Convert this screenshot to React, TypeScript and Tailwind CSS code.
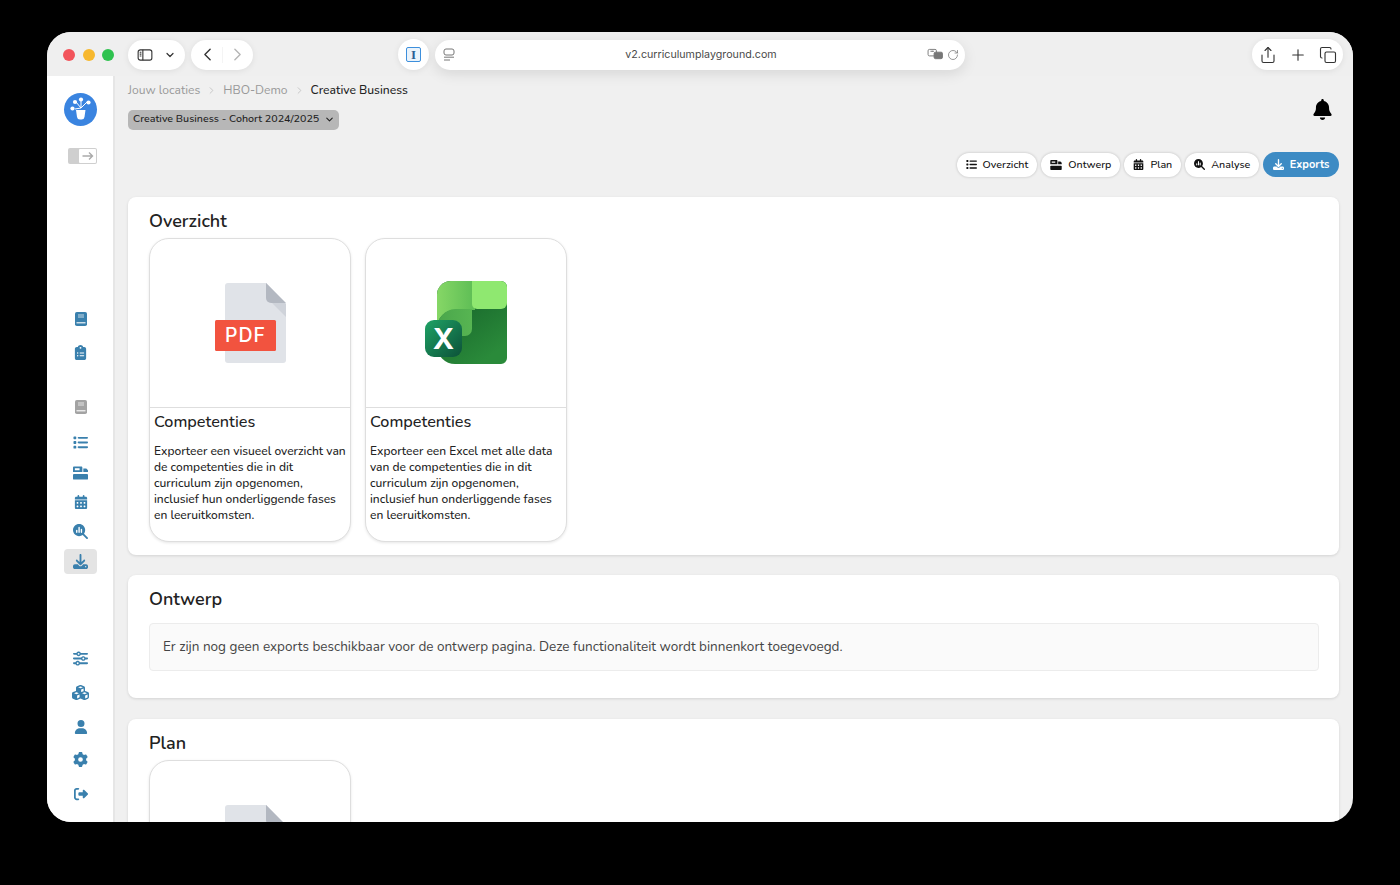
import React from "react";
import {
  FaClipboardList, FaList, FaCalendarDays, FaMagnifyingGlassChart, FaDownload,
  FaSliders, FaCubes, FaUser, FaGear, FaRightFromBracket, FaBell,
} from "react-icons/fa6";
import { ChevronLeft, ChevronRight, ChevronDown, Plus, RotateCw, Share, Copy } from "lucide-react";

const DesignIcon = ({ className }: { className?: string }) => (
  <svg viewBox="0 0 16 14" className={className} fill="currentColor">
    <path d="M1.2 0h7.6c.7 0 1.2.5 1.2 1.2V6H0V1.2C0 .5.5 0 1.2 0zM2 2v2h5V2H2zM11 2.2h3.2L16 4v2h-5V2.2z" />
    <path d="M1 8h14c.6 0 1 .4 1 1v4c0 .6-.4 1-1 1H1c-.6 0-1-.4-1-1V9c0-.6.4-1 1-1z" />
  </svg>
);

const BookIcon = ({ className }: { className?: string }) => (
  <svg viewBox="0 0 12 14" className={className}>
    <rect width="12" height="14" rx="1.8" fill="currentColor" />
    <path d="M3 3h6M3 5h6" stroke="#fff" strokeWidth="0.9" opacity="0.8" />
    <path d="M1.5 10.8h9" stroke="#fff" strokeWidth="1.1" />
  </svg>
);

const PdfIcon = ({ label = true }: { label?: boolean }) => (
  <svg viewBox="0 0 72 82" className="ml-[2px] h-[82px] w-[72px]">
    <path d="M13 1h38l20 21v56a3 3 0 0 1-3 3H13a3 3 0 0 1-3-3V4a3 3 0 0 1 3-3z" fill="#e0e3e8" />
    <path d="M51 1l20 21v13L51 15z" fill="#cfd3da" />
    <path d="M51 1l20 20H56a5 5 0 0 1-5-5z" fill="#b3b8c1" />
    <rect x="0" y="38" width="61" height="31" rx="1.5" fill="#f2533f" />
    {label && (
      <text x="30.5" y="60" textAnchor="middle" fill="#fff" fontSize="19.5" fontWeight="500" fontFamily="Inter, sans-serif" letterSpacing="0.9">PDF</text>
    )}
  </svg>
);

const ExcelIcon = () => (
  <svg viewBox="0 0 82 84" className="-mt-[2px] h-[84px] w-[82px]">
    <defs>
      <linearGradient id="xa" x1="0" y1="0" x2="1" y2="0"><stop offset="0" stopColor="#86d766" /><stop offset="1" stopColor="#5dbd55" /></linearGradient>
      <linearGradient id="xb" x1="0" y1="0" x2="0.6" y2="1"><stop offset="0" stopColor="#115a26" /><stop offset="1" stopColor="#2a8a3a" /></linearGradient>
      <linearGradient id="xc" x1="0" y1="0" x2="1" y2="1"><stop offset="0" stopColor="#1fa366" /><stop offset="1" stopColor="#0c5138" /></linearGradient>
      <linearGradient id="xd" x1="0" y1="0" x2="1" y2="0"><stop offset="0" stopColor="#4aa64b" /><stop offset="1" stopColor="#57b552" /></linearGradient>
    </defs>
    <path d="M26 1h50a6 6 0 0 1 6 6v71a6 6 0 0 1-6 6H30a18 18 0 0 1-18-18V15A14 14 0 0 1 26 1z" fill="url(#xb)" />
    <path d="M26 1h24v29H30a18 18 0 0 0-18 18V15A14 14 0 0 1 26 1z" fill="url(#xa)" />
    <path d="M30 29h17v20a7 7 0 0 1-7 7H12v-8a19 19 0 0 1 18-19z" fill="url(#xd)" />
    <path d="M47 1h29a6 6 0 0 1 6 6v16a6 6 0 0 1-6 6H52a5 5 0 0 1-5-5V1z" fill="#8fe870" />
    <rect x="0" y="40" width="37" height="37" rx="9" fill="url(#xc)" />
    <text x="18.5" y="69" textAnchor="middle" fill="#fff" fontSize="29" fontWeight="700" fontFamily="Inter, sans-serif">X</text>
  </svg>
);

const Tab = ({ icon, label, active }: { icon: React.ReactNode; label: string; active?: boolean }) => (
  <div className={`flex items-center gap-[6px] rounded-full ${active ? "h-[25px] bg-[#3d8bc4] px-[9.5px] text-[11px] font-bold text-white" : "h-[24px] bg-white px-[9px] text-[10.7px] font-medium text-[#111] shadow-[0_0_3px_rgba(0,0,0,0.22)]"}`}>
    {icon}
    <span className="pt-[1px]">{label}</span>
  </div>
);

const SideIcon = ({ children, active, cls }: { children: React.ReactNode; active?: boolean; cls?: string }) => (
  <div className={`flex h-[25px] w-[33px] items-center justify-center rounded-[4px] pl-px text-[#3a80ad] ${active ? "bg-[#e4e4e4]" : ""} ${cls ?? ""}`}>
    {children}
  </div>
);

const ExportCard = ({ icon, text }: { icon: React.ReactNode; text?: string }) => (
  <div className="flex h-[304px] w-[202px] flex-col overflow-hidden rounded-[20px] border border-[#dedede] bg-white shadow-[0_1px_3px_rgba(0,0,0,0.1)]">
    <div className="flex h-[169px] shrink-0 items-center justify-center border-b border-[#dedede]">{icon}</div>
    {text && (
      <div className="pl-[4px] pr-[1px] pt-[1.5px]">
        <div className="text-[16.2px] font-medium leading-[24px] text-[#222]">Competenties</div>
        <p className="mt-[9.5px] text-[12px] font-medium leading-[16px] text-[#222]">{text}</p>
      </div>
    )}
  </div>
);

export default function App() {
  return (
    <div className="h-[885px] w-[1400px] overflow-hidden bg-black px-[47px] pt-[32px] font-['Nunito','Noto_Sans',sans-serif]">
      <div className="flex h-[790px] w-[1306px] flex-col overflow-hidden rounded-[24px] bg-[#f0f0f0]">
        {/* Browser toolbar */}
        <div className="relative flex h-[44px] shrink-0 items-center bg-[#efefef] pt-[1px]">
          <div className="ml-[16px] flex gap-[7.5px]">
            <span className="h-[12px] w-[12px] rounded-full bg-[#f2545b]" />
            <span className="h-[12px] w-[12px] rounded-full bg-[#f7b82e]" />
            <span className="h-[12px] w-[12px] rounded-full bg-[#2fc24f]" />
          </div>
          <div className="ml-[14px] flex h-[30px] w-[57px] items-center justify-center gap-[11px] rounded-full bg-white shadow-[0_1px_6px_rgba(0,0,0,0.08)]">
            <svg viewBox="0 0 18 14" className="h-[12px] w-[16px]" fill="none" stroke="#333" strokeWidth="1.3">
              <rect x="1" y="1" width="16" height="12" rx="2.5" />
              <path d="M6.5 1v12M2.8 3.8h2M2.8 6h2M2.8 8.2h2" />
            </svg>
            <ChevronDown size={12} strokeWidth={2.4} color="#333" />
          </div>
          <div className="ml-[6px] flex h-[30px] w-[62px] items-center justify-center gap-[4px] rounded-full bg-white shadow-[0_1px_6px_rgba(0,0,0,0.08)]">
            <ChevronLeft size={21} strokeWidth={1.6} color="#333" />
            <span className="h-[16px] w-px bg-[#f4f4f4]" />
            <ChevronRight size={21} strokeWidth={1.6} color="#b5b5b5" />
          </div>
          <div className="ml-[145px] flex h-[31px] w-[31px] items-center justify-center rounded-full bg-white shadow-[0_1px_6px_rgba(0,0,0,0.08)]">
            <div className="flex h-[15px] w-[15px] items-center justify-center rounded-[2px] border border-[#3d8fdc] bg-[#eaf3fb] font-['Liberation_Serif',serif] text-[13px] font-bold leading-none text-[#2a5f95]">I</div>
          </div>
          <div className="ml-[6px] flex h-[30px] w-[530px] items-center rounded-full bg-white pl-[7px] pr-[6px] shadow-[0_4px_14px_rgba(0,0,0,0.1)]">
            <svg viewBox="0 0 14 14" className="mr-[19px] h-[14px] w-[14px]" fill="none" stroke="#777" strokeWidth="1">
              <rect x="2" y="1" width="10" height="6" rx="2" />
              <path d="M2 9.2h10M2 12h6" />
            </svg>
            <div className="flex-1 pt-[1px] text-center font-['Inter',sans-serif] text-[10.7px] text-[#4a4a4a]">v2.curriculumplayground.com</div>
            <svg viewBox="0 0 18 14" className="mr-[3px] h-[13px] w-[17px]" fill="none" stroke="#777" strokeWidth="1">
              <rect x="1" y="1.5" width="9" height="7" rx="1.5" />
              <path d="M3.5 3.5h4M5.5 3v1" />
              <rect x="7.5" y="4.5" width="9" height="7" rx="1.5" fill="#777" />
            </svg>
            <RotateCw size={12} strokeWidth={1.5} color="#777" />
          </div>
          <div className="ml-[287px] flex h-[31px] w-[91px] items-center justify-center gap-[12px] rounded-full bg-white shadow-[0_1px_6px_rgba(0,0,0,0.08)]">
            <Share size={18} strokeWidth={1.5} color="#333" />
            <Plus size={18} strokeWidth={1.5} color="#333" />
            <Copy size={18} strokeWidth={1.5} color="#333" />
          </div>
        </div>

        <div className="flex min-h-0 flex-1">
          {/* Sidebar */}
          <div className="flex w-[68px] shrink-0 flex-col items-center border-r-2 border-[#e6e6e6] bg-white pt-[17px]">
            <div className="relative h-[33px] w-[33px] rounded-full bg-[#3a84e0]">
              <svg viewBox="0 0 33 33" className="h-[33px] w-[33px]" fill="#fff" stroke="#fff">
                <path d="M17 15L12 9M17 15l6-6M17 15v-8M17 15l-6 1" strokeWidth="1" fill="none" />
                <circle cx="17" cy="6.5" r="2.1" stroke="none" />
                <circle cx="24.5" cy="9.5" r="2.1" stroke="none" />
                <circle cx="11" cy="9" r="2.1" stroke="none" />
                <circle cx="8.5" cy="15.5" r="2.1" stroke="none" />
                <path d="M12 17h9.5l-1 7a3 3 0 0 1-3 2.5h-1.5a3 3 0 0 1-3-2.5z" stroke="none" />
              </svg>
            </div>
            <div className="ml-[5px] mt-[22px] flex h-[16px] w-[29px] justify-end rounded-[2px] bg-[#cfcfcf] p-px">
              <div className="flex h-[14px] w-[17px] items-center justify-center rounded-[1px] bg-white text-[#aaa]">
                <svg viewBox="0 0 12 10" className="h-[10px] w-[12px]" fill="none" stroke="currentColor" strokeWidth="1.4"><path d="M0.5 5h10M7 1.5L10.5 5 7 8.5" /></svg>
              </div>
            </div>
            <div className="mt-[142px] flex flex-col items-center">
              <SideIcon><BookIcon className="h-[14px] w-[12px]" /></SideIcon>
              <SideIcon cls="mt-[9px]"><FaClipboardList size={15} /></SideIcon>
              <SideIcon cls="mt-[29px] !text-[#a3a3a3]"><BookIcon className="h-[14px] w-[12px]" /></SideIcon>
              <SideIcon cls="mt-[11px]"><FaList size={15} /></SideIcon>
              <SideIcon cls="mt-[5px]"><DesignIcon className="h-[14px] w-[15px]" /></SideIcon>
              <SideIcon cls="mt-[4px]"><FaCalendarDays size={14} /></SideIcon>
              <SideIcon cls="mt-[5px]"><FaMagnifyingGlassChart size={15} /></SideIcon>
              <SideIcon active cls="mt-[5px]"><FaDownload size={15} /></SideIcon>
              <SideIcon cls="mt-[72px]"><FaSliders size={15} /></SideIcon>
              <SideIcon cls="mt-[9px]"><FaCubes size={17} /></SideIcon>
              <SideIcon cls="mt-[9px]"><FaUser size={14} /></SideIcon>
              <SideIcon cls="mt-[8px]"><FaGear size={15} /></SideIcon>
              <SideIcon cls="mt-[9px]"><FaRightFromBracket size={14} /></SideIcon>
            </div>
          </div>

          {/* Main */}
          <div className="min-w-0 flex-1 overflow-hidden pl-[13px] pr-[14px]">
            <div className="flex items-start justify-between">
              <div>
                <div className="mt-[5.5px] flex h-[18px] items-center text-[12.1px]">
                  <span className="text-[#999]">Jouw locaties</span>
                  <ChevronRight size={11} color="#c4c4c4" className="mx-[6px]" />
                  <span className="text-[#999]">HBO-Demo</span>
                  <ChevronRight size={11} color="#c4c4c4" className="mx-[6px]" />
                  <span className="font-medium text-[#222]">Creative Business</span>
                </div>
                <div className="mt-[10.5px] flex h-[20px] w-[211px] items-center justify-between rounded-[5px] bg-[#b7b7b7] pb-[1px] pl-[5px] pr-[4px] text-[10.7px] font-medium text-[#222]">
                  <span>Creative Business - Cohort 2024/2025</span>
                  <ChevronDown size={11} strokeWidth={2.4} />
                </div>
              </div>
              <FaBell size={21} className="mr-[6px] mt-[23px] text-black" />
            </div>

            <div className="mt-[22px] flex h-[25px] items-center justify-end gap-[4px]">
              <Tab icon={<FaList size={11} />} label="Overzicht" />
              <Tab icon={<DesignIcon className="h-[10px] w-[12px]" />} label="Ontwerp" />
              <Tab icon={<FaCalendarDays size={11} />} label="Plan" />
              <Tab icon={<FaMagnifyingGlassChart size={11} />} label="Analyse" />
              <Tab icon={<FaDownload size={11} />} label="Exports" active />
            </div>

            <section className="mt-[20px] h-[358px] rounded-[8px] bg-white pl-[21px] pr-[20px] pt-[12px] shadow-[0_1px_3px_rgba(0,0,0,0.12)]">
              <h2 className="text-[18px] font-semibold leading-[24px] text-[#222]">Overzicht</h2>
              <div className="mt-[5px] flex gap-[14px]">
                <ExportCard icon={<PdfIcon />} text="Exporteer een visueel overzicht van de competenties die in dit curriculum zijn opgenomen, inclusief hun onderliggende fases en leeruitkomsten." />
                <ExportCard icon={<ExcelIcon />} text="Exporteer een Excel met alle data van de competenties die in dit curriculum zijn opgenomen, inclusief hun onderliggende fases en leeruitkomsten." />
              </div>
            </section>

            <section className="mt-[20px] h-[123px] rounded-[8px] bg-white pl-[21px] pr-[20px] pt-[12px] shadow-[0_1px_3px_rgba(0,0,0,0.12)]">
              <h2 className="text-[18px] font-semibold leading-[24px] text-[#222]">Ontwerp</h2>
              <div className="mt-[12px] flex h-[48px] items-center rounded-[4px] border border-[#ececec] bg-[#fafafa] px-[13px] text-[13.5px] text-[#444]">
                Er zijn nog geen exports beschikbaar voor de ontwerp pagina. Deze functionaliteit wordt binnenkort toegevoegd.
              </div>
            </section>

            <section className="mt-[20.5px] h-[300px] rounded-[8px] bg-white pl-[21px] pr-[20px] pt-[12px] shadow-[0_1px_3px_rgba(0,0,0,0.12)]">
              <h2 className="text-[18px] font-semibold leading-[24px] text-[#222]">Plan</h2>
              <div className="mt-[5px] flex gap-[14px]">
                <ExportCard icon={<PdfIcon label={false} />} />
              </div>
            </section>
          </div>
        </div>
      </div>
    </div>
  );
}
